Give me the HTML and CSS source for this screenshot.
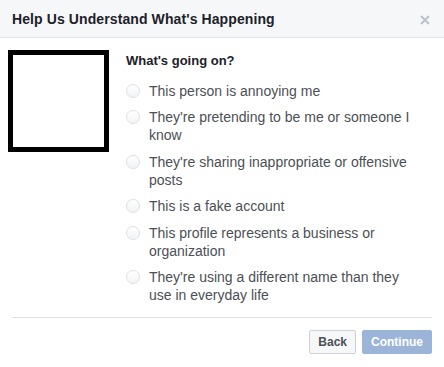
FILE: index.html
```html
<!DOCTYPE html>
<html lang="en">
<head>
    <meta charset="UTF-8">
    <title>Help Us Understand What's Happening</title>
    <link rel="stylesheet" href="styles.css">
</head>
<body>
    <div class="dialog">
        <div class="dialog-header">
            <h1>Help Us Understand What's Happening</h1>
            <span class="close">
                <svg width="10" height="10" viewBox="0 0 10 10"><path d="M1 1L9 9M9 1L1 9" stroke="#bec2c9" stroke-width="2"/></svg>
            </span>
        </div>

        <div class="dialog-body">
            <div class="photo"></div>
            <div class="question">
                <h2>What's going on?</h2>
                <label class="option"><span class="radio"></span><span>This person is annoying me</span></label>
                <label class="option"><span class="radio"></span><span>They're pretending to be me or someone I know</span></label>
                <label class="option"><span class="radio"></span><span>They're sharing inappropriate or offensive posts</span></label>
                <label class="option"><span class="radio"></span><span>This is a fake account</span></label>
                <label class="option"><span class="radio"></span><span>This profile represents a business or organization</span></label>
                <label class="option"><span class="radio"></span><span>They're using a different name than they use in everyday life</span></label>
            </div>
        </div>

        <div class="dialog-footer">
            <button class="btn">Back</button>
            <button class="btn btn-primary" disabled>Continue</button>
        </div>
    </div>
</body>
</html>
```

FILE: styles.css
```css
body {
    margin: 0;
    font-family: "Liberation Sans", Arial, sans-serif;
    color: #1d2129;
    background: #fff;
}
.dialog {
    width: 444px;
}
.dialog-header {
    height: 37px;
    background-color: #f6f7f9;
    border-bottom: 1px solid #e5e5e5;
    display: flex;
    align-items: center;
    justify-content: space-between;
    padding: 0 14px 0 12px;
}
.dialog-header h1 {
    margin: 0;
    font-size: 14px;
    font-weight: bold;
    letter-spacing: 0.1px;
    color: #1d2129;
}
.close {
    display: flex;
    margin-top: 2px;
}
.dialog-body {
    display: flex;
    padding: 12px 12px 0 8px;
}
.photo {
    width: 91px;
    height: 92px;
    border: 5px solid #000;
    flex-shrink: 0;
}
.question {
    margin-left: 17px;
    width: 292px;
}
.question h2 {
    margin: 3px 0 14px;
    font-size: 13px;
    font-weight: bold;
    color: #1d2129;
}
.option {
    display: flex;
    align-items: flex-start;
    font-size: 14px;
    line-height: 18px;
    color: #4b4f56;
    margin-bottom: 8.4px;
}
.radio {
    width: 12px;
    height: 12px;
    border: 1px solid #dddfe2;
    border-radius: 50%;
    background: linear-gradient(#fff, #f2f3f5);
    flex-shrink: 0;
    margin: 2px 9px 0 0;
}
.dialog-footer {
    margin: 5px 12px 0;
    border-top: 1px solid #dddfe2;
    padding-top: 12px;
    display: flex;
    justify-content: flex-end;
    gap: 6px;
}
.btn {
    font-family: inherit;
    font-size: 12px;
    font-weight: bold;
    height: 24px;
    padding: 0 8px;
    border: 1px solid #ced0d4;
    border-radius: 2px;
    background-color: #f6f7f9;
    color: #4b4f56;
}
.btn-primary {
    background-color: #9cb4d8;
    border-color: #9cb4d8;
    color: #fff;
}
```
